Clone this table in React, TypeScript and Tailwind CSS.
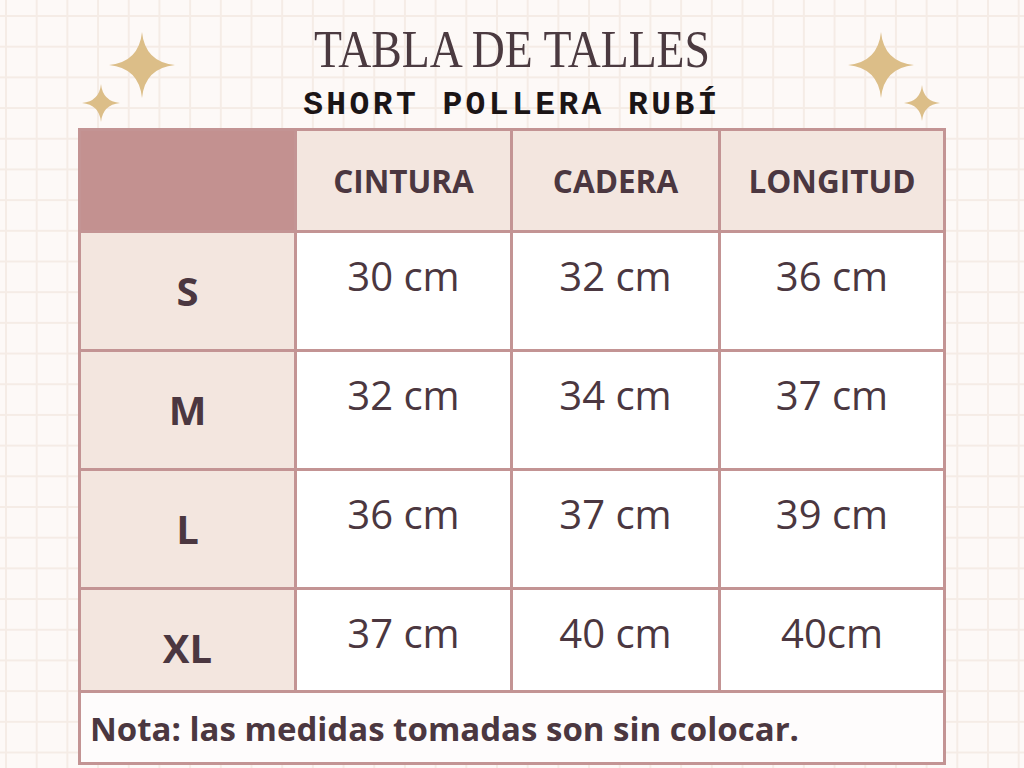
import React from "react"

const rows = [
  { size: "S", values: ["30 cm", "32 cm", "36 cm"] },
  { size: "M", values: ["32 cm", "34 cm", "37 cm"] },
  { size: "L", values: ["36 cm", "37 cm", "39 cm"] },
  { size: "XL", values: ["37 cm", "40 cm", "40cm"] },
]

function Sparkle({ size, className }: { size: number; className?: string }) {
  return (
    <svg width={size} height={size} viewBox="-1 -1 2 2" className={className}>
      <path
        d="M0,-1 Q0.09,-0.09 1,0 Q0.09,0.09 0,1 Q-0.09,0.09 -1,0 Q-0.09,-0.09 0,-1 Z"
        fill="#dcbe88"
      />
    </svg>
  )
}

export default function App() {
  return (
    <div
      className="relative flex h-[768px] w-[1024px] flex-col overflow-hidden bg-[#fdf9f7] bg-[linear-gradient(to_right,#f5ece6_1.5px,transparent_1.5px),linear-gradient(to_bottom,#f5ece6_1.5px,transparent_1.5px)] bg-[size:30.7px_30.7px] bg-[position:5px_15px]"
      style={{ fontFamily: '"Open Sans", sans-serif' }}
    >
      {/* sparkles (decoration over the background) */}
      <Sparkle size={66} className="absolute left-[109px] top-[32px]" />
      <Sparkle size={38} className="absolute left-[82px] top-[84px]" />
      <Sparkle size={66} className="absolute left-[848px] top-[32px]" />
      <Sparkle size={36} className="absolute left-[904px] top-[85px]" />

      {/* header */}
      <div className="flex flex-col items-center pt-[24px]">
        <h1
          className="origin-center scale-x-[0.88] text-[52px] leading-[52px] text-[#4b3a40]"
          style={{ fontFamily: '"Liberation Serif", serif' }}
        >
          TABLA DE TALLES
        </h1>
        <p
          className="mt-[13px] text-[33px] font-bold leading-[34px] tracking-[3.4px] text-[#1b1516]"
          style={{ fontFamily: '"Liberation Mono", monospace' }}
        >
          SHORT POLLERA RUBÍ
        </p>
      </div>

      {/* table */}
      <div className="ml-[78px] mt-[5px] w-[868px]">
        <div className="grid grid-cols-[213px_213px_205px_222px] gap-[3px] bg-[#c39494] px-[3px] pt-[3px]">
          <div className="h-[99px] bg-[#c39190]" />
          {["CINTURA", "CADERA", "LONGITUD"].map((h) => (
            <div
              key={h}
              className="flex h-[99px] items-center justify-center bg-[#f3e6df] text-[31.5px] font-bold text-[#4b3740]"
            >
              {h}
            </div>
          ))}
          {rows.map((r, i) => {
            const last = i === rows.length - 1
            return (
              <React.Fragment key={r.size}>
                <div
                  className={
                    last
                      ? "flex h-[100px] items-start justify-center bg-[#f3e6df] pt-[38px] text-[40px] font-bold leading-none text-[#4b3740]"
                      : "flex h-[116px] items-center justify-center bg-[#f3e6df] text-[40px] font-bold leading-none text-[#4b3740]"
                  }
                >
                  {r.size}
                </div>
                {r.values.map((v, j) => (
                  <div
                    key={j}
                    className={
                      (last ? "h-[100px]" : "h-[116px]") +
                      " bg-white pt-[23px] text-center text-[40px] leading-none text-[#4b3740]"
                    }
                  >
                    {v}
                  </div>
                ))}
              </React.Fragment>
            )
          })}
        </div>
        <div className="flex h-[75px] items-center border-[3px] border-[#c39494] bg-[#fefcfc] pl-[9px] pt-[2px] text-[33px] font-bold text-[#4b3740]">
          Nota: las medidas tomadas son sin colocar.
        </div>
      </div>
    </div>
  )
}
